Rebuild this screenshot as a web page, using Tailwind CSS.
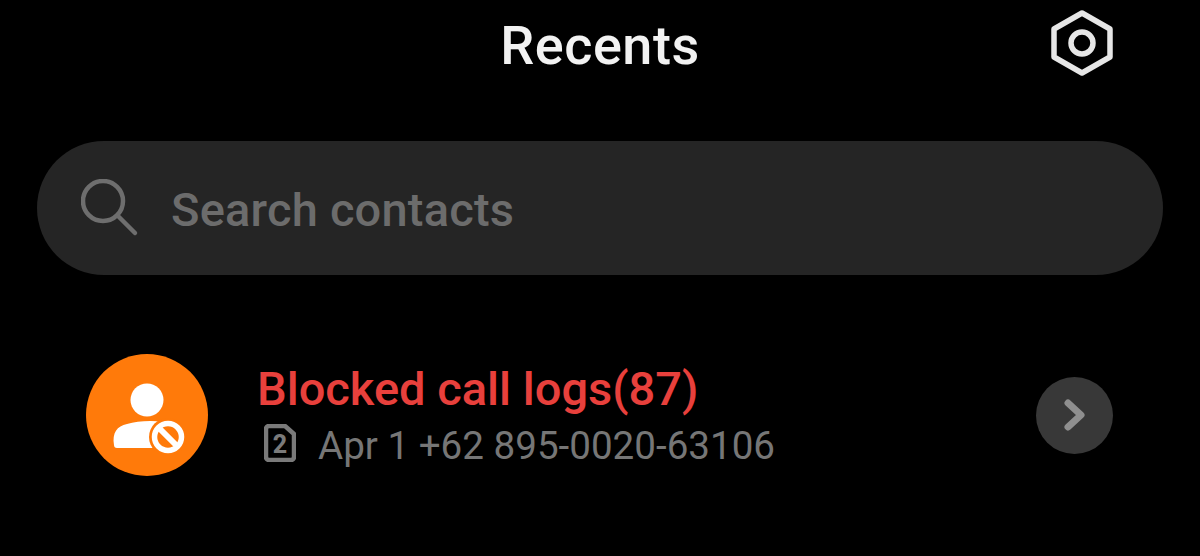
<!DOCTYPE html>
<html>
<head>
<meta charset="utf-8">
<script src="https://cdn.jsdelivr.net/npm/@tailwindcss/browser@4"></script>
</head>
<body class="bg-black">
<div class="w-[1200px] h-[556px] overflow-hidden bg-black font-['Roboto',sans-serif] flex flex-col">
  <header class="relative h-[92px] flex items-center justify-center">
    <h1 class="text-[54px] leading-none font-medium tracking-[0.5px] text-[#f2f2f2]">Recents</h1>
    <svg class="absolute left-[1050px] top-[9px] w-[64px] h-[68px]" viewBox="0 0 64 68" fill="none" stroke="#e6e6e6" stroke-width="5.5" stroke-linejoin="round">
      <path d="M32 4 L60 20 V48 L32 64 L4 48 V20 Z"/>
      <circle cx="32" cy="34" r="11"/>
    </svg>
  </header>
  <div class="mx-[37px] mt-[49px] h-[134px] rounded-[67px] bg-[#252525] flex items-center pl-[44px]">
    <svg class="w-[58px] h-[58px] shrink-0" viewBox="0 0 58 58" fill="none" stroke="#6e6e6e" stroke-width="4.5" stroke-linecap="round">
      <circle cx="22" cy="22" r="20"/>
      <path d="M37 37 L54 54"/>
    </svg>
    <span class="ml-[32px] text-[47px] leading-none font-medium tracking-[0.2px] text-[#6c6c6c] translate-y-[1px]">Search contacts</span>
  </div>
  <div class="mt-[79px] pl-[86px] pr-[87px] flex items-center">
    <div class="w-[122px] h-[122px] rounded-full bg-[#ff7a0a] shrink-0 flex items-center justify-center">
      <svg class="w-[72px] h-[72px] overflow-visible" viewBox="0 0 72 72" fill="none">
        <circle cx="36" cy="21" r="16.5" fill="#fff"/>
        <path d="M3 66 C1 54 6 47 16 45 C26 42 40 41 54 43 L50 69 H6 Q3 69 3 66 Z" fill="#fff"/>
        <circle cx="57" cy="58" r="19" fill="#ff7a0a"/>
        <circle cx="57" cy="58" r="13.5" stroke="#fff" stroke-width="5.5"/>
        <path d="M47.5 48.5 L66.5 67.5" stroke="#fff" stroke-width="6"/>
      </svg>
    </div>
    <div class="ml-[49px] flex-1 flex flex-col">
      <div class="text-[47px] leading-[50px] font-medium text-[#e8403c] translate-y-[1px]">Blocked call logs(87)</div>
      <div class="flex items-center mt-[11px]">
        <svg class="ml-[7px] mb-[6px] w-[32px] h-[38px] shrink-0" viewBox="0 0 32 38" fill="none">
          <path d="M5 2 H21 L30 10 V33 a3 3 0 0 1 -3 3 H5 a3 3 0 0 1 -3 -3 V5 a3 3 0 0 1 3 -3 Z" stroke="#7a7a7a" stroke-width="4.5" stroke-linejoin="round"/>
          <text x="16" y="28.5" text-anchor="middle" font-size="25" font-weight="800" fill="#7a7a7a" font-family="Roboto">2</text>
        </svg>
        <span class="ml-[22px] text-[38.6px] leading-[40px] text-[#767676]">Apr 1 +62 895-0020-63106</span>
      </div>
    </div>
    <div class="w-[77px] h-[77px] rounded-full bg-[#383838] shrink-0 flex items-center justify-center">
      <svg class="w-[24px] h-[32px]" viewBox="0 0 24 32" fill="none" stroke="#8f8f8f" stroke-width="7" stroke-linecap="round" stroke-linejoin="round">
        <path d="M5 4 L18 16 L5 28"/>
      </svg>
    </div>
  </div>
</div>
</body>
</html>
